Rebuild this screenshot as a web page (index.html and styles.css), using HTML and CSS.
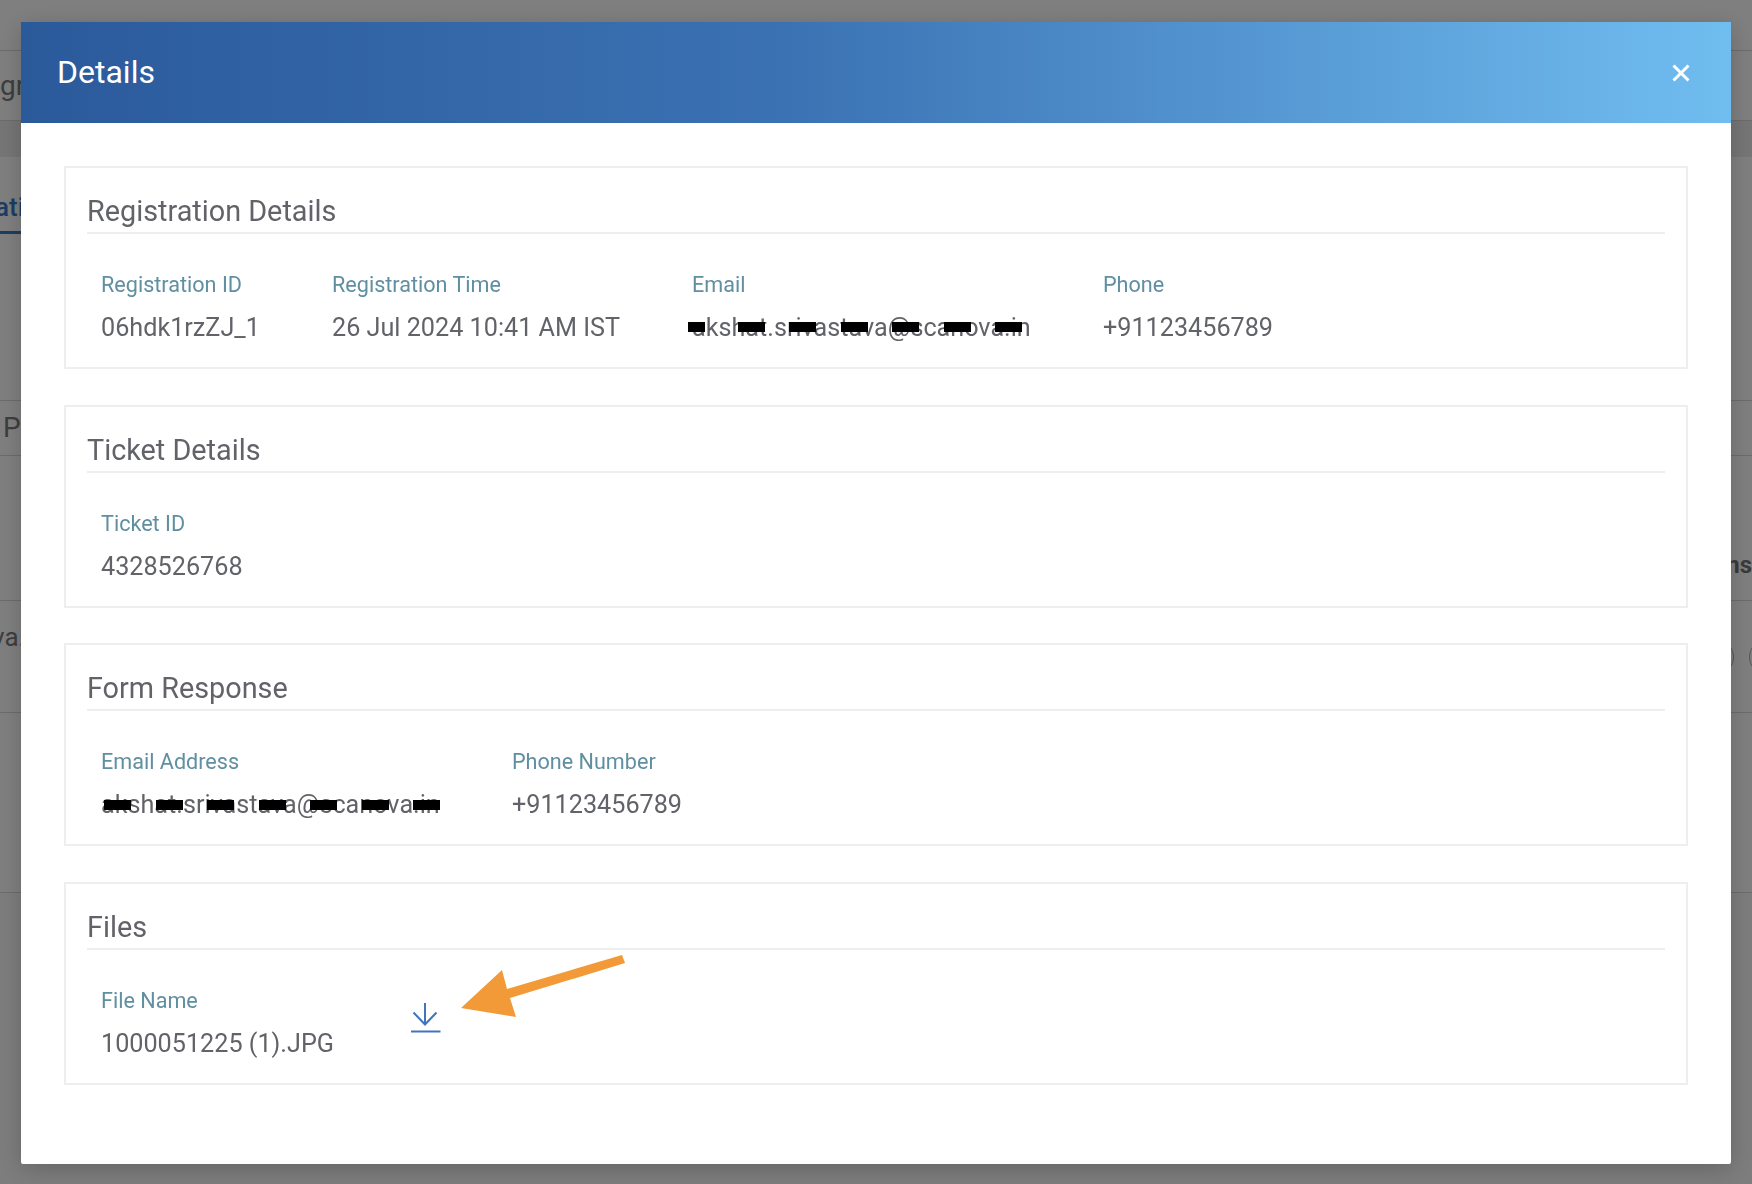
FILE: index.html
```html
<!DOCTYPE html>
<html lang="en">
<head>
    <meta charset="UTF-8">
    <title>Details</title>
    <link rel="stylesheet" href="styles.css">
</head>
<body>
    <!-- page behind the dialog, only the edges show -->
    <div class="page">
        <div class="page-top"></div>
        <div class="page-row page-title"><span>gr</span></div>
        <div class="page-gap"></div>
        <div class="page-row page-tabs"><span class="tab-active">ati</span></div>
        <div class="page-space page-space-a"></div>
        <div class="page-row page-search"><span>Pe</span></div>
        <div class="page-row page-head"><span>ns</span></div>
        <div class="page-row page-cell">
            <span class="cell-text">va.</span>
            <span class="page-pills"><i class="pill"></i><i class="pill"></i></span>
        </div>
        <div class="page-space page-space-b"></div>
        <div class="page-rest"></div>
    </div>
    <div class="overlay"></div>

    <div class="modal">
        <div class="modal-header">
            <h1>Details</h1>
            <svg class="close-icon" width="20" height="20" viewBox="0 0 20 20">
                <path d="M2.500 2.500 L17.500 17.500 M17.500 2.500 L2.500 17.500" stroke="#fff" stroke-width="3" fill="none"/>
            </svg>
        </div>
        <div class="modal-body">
            <section class="card">
                <h2>Registration Details</h2>
                <div class="fields">
                    <div class="field w-reg-id"><label>Registration ID</label><p>06hdk1rzZJ_1</p></div>
                    <div class="field w-reg-time"><label>Registration Time</label><p>26 Jul 2024 10:41 AM IST</p></div>
                    <div class="field w-email">
                        <label>Email</label>
                        <p class="redacted">akshat.srivastava@scanova.in
                            <span class="marks marks-a"><i></i><i></i><i></i><i></i><i></i><i></i><i></i></span>
                        </p>
                    </div>
                    <div class="field"><label>Phone</label><p>+91123456789</p></div>
                </div>
            </section>
            <section class="card">
                <h2>Ticket Details</h2>
                <div class="fields">
                    <div class="field"><label>Ticket ID</label><p>4328526768</p></div>
                </div>
            </section>
            <section class="card">
                <h2>Form Response</h2>
                <div class="fields">
                    <div class="field w-form-email">
                        <label>Email Address</label>
                        <p class="redacted">akshat.srivastava@scanova.in
                            <span class="marks marks-b"><i></i><i></i><i></i><i></i><i></i><i></i><i></i></span>
                        </p>
                    </div>
                    <div class="field"><label>Phone Number</label><p>+91123456789</p></div>
                </div>
            </section>
            <section class="card">
                <h2>Files</h2>
                <div class="fields">
                    <div class="field w-file"><label>File Name</label><p>1000051225 (1).JPG</p></div>
                    <svg class="download-icon" width="32" height="32" viewBox="0 0 32 32">
                        <path d="M15 1 V23 M3.500 10.500 L15 22.500 L26.500 10.500" stroke="#3f75b9" stroke-width="2" fill="none"/>
                        <path d="M1 29.500 H30.500" stroke="#3f75b9" stroke-width="2" fill="none"/>
                    </svg>
                </div>
            </section>
        </div>
    </div>

    <!-- annotation arrow drawn on top of the screenshot -->
    <svg class="arrow" width="170" height="70" viewBox="0 0 170 70">
        <path d="M161 0 L164 8 L49 43 L55 62 L0 53 L41 15 L46 34 Z" fill="#f29a38"/>
    </svg>
</body>
</html>
```

FILE: styles.css
```css
* {
    box-sizing: border-box;
}
body {
    margin: 0;
    height: 1184px;
    overflow: hidden;
    font-family: Roboto, sans-serif;
    background-color: #fff;
    color: #626369;
}

/* background page */
.page {
    height: 1184px;
    display: flex;
    flex-direction: column;
    color: #7c7c7c;
}
.page-top {
    height: 51px;
    border-bottom: 1px solid #d8d8d8;
}
.page-row {
    display: flex;
    justify-content: space-between;
    overflow: hidden;
    line-height: 30px;
}
.page-title {
    height: 70px;
    align-items: center;
    font-size: 28px;
    border-bottom: 1px solid #d8d8d8;
}
.page-gap {
    height: 36px;
    background-color: #ececec;
}
.page-tabs {
    height: 77px;
    align-items: flex-end;
    font-size: 26px;
    font-weight: 500;
}
.tab-active {
    margin-left: -5px;
    padding-bottom: 9px;
    color: #3c78c8;
    border-bottom: 3px solid #3c78c8;
}
.page-space-a {
    height: 166px;
}
.page-space-b {
    height: 179px;
}
.page-search {
    height: 56px;
    padding-left: 3px;
    align-items: center;
    font-size: 28px;
    border-top: 1px solid #d8d8d8;
    border-bottom: 1px solid #d8d8d8;
}
.page-head {
    height: 145px;
    padding-bottom: 20px;
    justify-content: flex-end;
    align-items: flex-end;
    font-size: 24px;
    font-weight: 700;
    color: #757575;
    border-bottom: 1px solid #d8d8d8;
}
.page-cell {
    height: 112px;
    padding-top: 21px;
    font-size: 26px;
    border-bottom: 1px solid #d8d8d8;
}
.cell-text {
    margin-left: -8px;
}
.page-rest {
    flex: 1;
    background-color: #fafafa;
    border-top: 1px solid #d8d8d8;
}
.page-pills {
    display: flex;
    gap: 15px;
    margin-top: 17px;
    margin-right: -33px;
}
.pill {
    width: 36px;
    height: 36px;
    border: 1px solid #aaa;
    border-radius: 50%;
}
.overlay {
    position: fixed;
    inset: 0;
    background-color: rgba(0,0,0,0.5);
}

/* dialog */
.modal {
    position: fixed;
    left: 21px;
    top: 22px;
    width: 1710px;
    height: 1142px;
    background: white;
    border-radius: 2px;
    box-shadow: 0 5px 25px rgba(0,0,0,0.2);
}
.modal-header {
    height: 101px;
    padding: 0 40px 0 36px;
    display: flex;
    justify-content: space-between;
    align-items: center;
    background: linear-gradient(90deg, #2b5a9b 0%, #3b72b3 45%, #4e8dca 65%, #70bdf0 100%);
}
.modal-header h1 {
    margin: 0 0 2px;
    font-size: 32px;
    font-weight: 400;
    color: white;
}
.modal-body {
    padding: 43px 43px 0;
    display: flex;
    flex-direction: column;
    gap: 35.670px;
}
.card {
    height: 203px;
    padding: 25px 21px 0;
    border: 2px solid #eeeef0;
}
.card h2 {
    margin: 0;
    padding-bottom: 3px;
    font-size: 28.800px;
    line-height: 36px;
    font-weight: 400;
    border-bottom: 2px solid #eeeef0;
}
.fields {
    display: flex;
    padding: 38px 14px 0;
}
.field label {
    display: block;
    font-size: 21.600px;
    line-height: 26px;
    color: #5f8fa0;
}
.field p {
    margin: 15px 0 0;
    font-size: 25.200px;
    line-height: 30px;
    white-space: nowrap;
}
.w-reg-id { width: 231px; }
.w-reg-time { width: 360px; }
.w-email { width: 411px; }
.w-form-email { width: 411px; }
.w-file { width: 309px; }

/* black marks over the address */
.redacted {
    position: relative;
}
.marks {
    position: absolute;
    display: flex;
    gap: 24.500px;
}
.marks i {
    height: 10px;
    width: 27px;
    background-color: #000;
}
.marks-a {
    top: 9px;
    left: -4px;
}
.marks-a i:first-child {
    width: 17px;
    margin-right: 8px;
}
.marks-b {
    top: 10px;
    left: 3px;
}
.download-icon {
    margin-top: 14px;
}
.arrow {
    position: fixed;
    left: 461px;
    top: 955px;
}
```
